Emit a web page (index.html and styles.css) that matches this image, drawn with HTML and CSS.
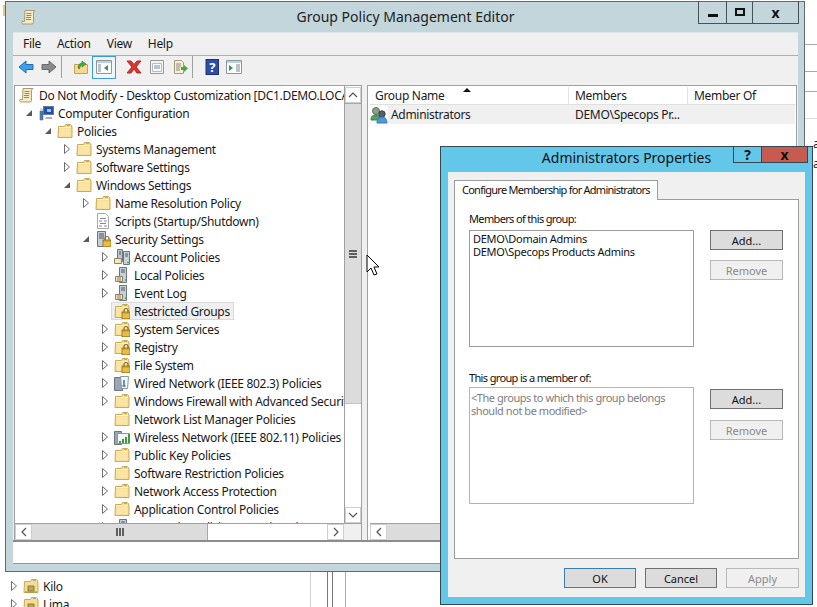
FILE: index.html
```html
<!DOCTYPE html>
<html lang="en">
<head>
    <meta charset="UTF-8">
    <title>Group Policy Management Editor</title>
    <link rel="stylesheet" href="styles.css">
</head>
<body>
    <svg class="defs" width="0" height="0">
        <symbol id="folder" viewBox="0 0 16 16">
            <path d="M1.500 3.500h6l1-2h5l1 1v1h.5v11h-14z" fill="#f7dd92" stroke="#c9a95f"/>
            <path d="M2 4.500h12" stroke="#fdf3cf"/>
            <path d="M10 2.500h3" stroke="#7db7e0"/>
            <path d="M2.500 5.500h11v8h-11z" fill="#fae5a6"/>
        </symbol>
        <symbol id="gpo-folder" viewBox="0 0 16 16">
            <path d="M1.500 3.500h6l1-2h5l1 1v1h.5v11h-14z" fill="#f7dd92" stroke="#c9a95f"/>
            <path d="M10 2.500h3" stroke="#7db7e0"/>
            <path d="M5 8h6v5H5z" fill="#b8a860" stroke="#8a7a38"/>
            <path d="M2 14h12" stroke="#a88c3c"/>
        </symbol>
        <symbol id="lock" viewBox="0 0 16 16">
            <path d="M10 9.500v-2a2 2 0 0 1 4 0v2" fill="none" stroke="#7d6a2a" stroke-width="1.200"/>
            <rect x="8" y="9" width="8" height="7" fill="#d9a72b" stroke="#8a6a14" stroke-width=".8"/>
            <path d="M8.500 12h7M8.500 14h7" stroke="#f2d36b"/>
        </symbol>
        <symbol id="scroll" viewBox="0 0 16 16">
            <path d="M4 1.500h10l-1.500 1.500v10.500a1.500 1.500 0 0 1-1.500 1.500H2a1.500 1.500 0 0 1-1-2.500h2.500z" fill="#f7ebc6" stroke="#a99b72"/>
            <path d="M5.500 4.500h5M5.500 6.500h5M5 8.500h5M5 10.500h5" stroke="#8f8a78"/>
        </symbol>
        <symbol id="computer" viewBox="0 0 16 16">
            <rect x="5.500" y="1.500" width="10" height="8" fill="#1f4fb5" stroke="#6f7a8a"/>
            <path d="M8 12h6v2H7z" fill="#aab3bd"/>
            <path d="M2 6h3v9H2z" fill="#3f7fb0" stroke="#5c6c7c" stroke-width=".6"/>
            <circle cx="3.500" cy="4.500" r="1.500" fill="#c9d3dd"/>
            <path d="M9 4h4v3H9z" fill="#9fc3ef"/>
        </symbol>
        <symbol id="script" viewBox="0 0 16 16">
            <path d="M2.500.5h8l3 3v12h-11z" fill="#fff" stroke="#a8a8a8"/>
            <path d="M5 5.500h6M4 8h3M9 8h3M5 10.500h6M4 13h3M9 13h3" stroke="#7c8c9c"/>
        </symbol>
        <symbol id="tower" viewBox="0 0 16 16">
            <path d="M2.500.5h8v15h-8z" fill="#c6ced6" stroke="#6b7680"/>
            <path d="M4 3h5M4 5h5M4 7h5" stroke="#4b5660"/>
        </symbol>
        <symbol id="server" viewBox="0 0 16 16">
            <path d="M5.500.5h7v15h-7z" fill="#c6ced6" stroke="#6b7680"/>
            <path d="M7 3h4M7 5h4" stroke="#4b5660"/>
            <path d="M1.500 9.500h7v5h-7z" fill="#f3e6bd" stroke="#8c8268"/>
            <path d="M3 11h4M3 13h4" stroke="#8c8268"/>
            <path d="M11 13h1.500" stroke="#35b04a" stroke-width="1.500"/>
        </symbol>
        <symbol id="servers" viewBox="0 0 16 16">
            <path d="M3.500.5h5v12h-5z" fill="#bcc6cf" stroke="#6b7680"/>
            <path d="M9.500 2.500h6v13h-6z" fill="#c9d3da" stroke="#6b7680"/>
            <path d="M11 5h3M11 7h3M5 3h2M5 5h2" stroke="#4b5660"/>
            <path d="M.5 9.500h7v5h-7z" fill="#f3e6bd" stroke="#8c8268"/>
            <path d="M13 13.500h2" stroke="#35b04a" stroke-width="1.500"/>
        </symbol>
        <symbol id="wired" viewBox="0 0 16 16">
            <path d="M.5 2.500h8v13h-8z" fill="#9aa6b2" stroke="#6b7680"/>
            <path d="M6.500 1.500h8l-1 12h-6z" fill="#f4f8fb" stroke="#8a97a3"/>
            <path d="M10 5v6M8.500 11h3" stroke="#3674ac" stroke-width="1.500"/>
        </symbol>
        <symbol id="wireless" viewBox="0 0 16 16">
            <path d="M.5 2.500h7v13h-7z" fill="#9aa6b2" stroke="#6b7680"/>
            <path d="M3.500 4.500h12v10h-12z" fill="#f4f8f4" stroke="#8a97a3"/>
            <path d="M6 14v-2M9 14v-4M12 14V8M15 14V5" stroke="#3d9a3d" stroke-width="2"/>
        </symbol>
        <symbol id="users" viewBox="0 0 18 18">
            <circle cx="6" cy="5" r="3.500" fill="#8aa08c" stroke="#5b6c5c"/>
            <path d="M1 14c0-4 2-5 5-5s4 1 4 5z" fill="#4fa35a" stroke="#3e7f48"/>
            <circle cx="12" cy="8" r="3.200" fill="#54606c" stroke="#39434e"/>
            <path d="M7 17c0-4 2-6 5-6s5 2 5 6z" fill="#4f9ad8" stroke="#3978ad"/>
        </symbol>
        <symbol id="tree-open" viewBox="0 0 8 8"><path d="M7 1v6H1z" fill="#5a5a5a"/></symbol>
        <symbol id="tree-closed" viewBox="0 0 8 12"><path d="M1.500 1.500 6.500 6l-5 4.500z" fill="#fff" stroke="#6e6e6e"/></symbol>
    </svg>

    <div class="backdrop">
        <div class="bg-sliver"></div>
        <div class="bg-rule bg-rule-a"></div>
        <div class="bg-rule bg-rule-b"></div>
        <div class="bg-rule bg-rule-c"></div>
        <div class="bg-rule bg-rule-d"></div>
        <div class="bg-col bg-col-a"></div>
        <div class="bg-col bg-col-b"></div>
        <div class="bg-col bg-col-c"></div>
        <div class="bg-col bg-col-d"></div>
        <div class="bg-letter bg-letter-a">a</div>
        <div class="bg-letter bg-letter-b">a</div>
        <div class="bg-rows">
            <div class="row"><svg class="exp-closed"><use href="#tree-closed"/></svg><svg class="ico"><use href="#gpo-folder"/></svg><span>Kilo</span></div>
            <div class="row"><svg class="exp-closed"><use href="#tree-closed"/></svg><svg class="ico"><use href="#gpo-folder"/></svg><span>Lima</span></div>
        </div>
    </div>

    <div class="window main-window">
        <div class="titlebar">
            <svg class="title-icon"><use href="#scroll"/></svg>
            <div class="title-text">Group Policy Management Editor</div>
            <div class="caption-btns">
                <div class="cap cap-min"><span class="glyph-min"></span></div>
                <div class="cap cap-max"><span class="glyph-max"></span></div>
                <div class="cap cap-close">x</div>
            </div>
        </div>
        <div class="client">
            <div class="menubar">
                <span>File</span><span>Action</span><span>View</span><span>Help</span>
            </div>
            <div class="toolbar">
                <svg class="tool" viewBox="0 0 16 16"><path d="M8 2 1 8l7 6v-3.500h7v-5H8z" fill="#3f9fe8" stroke="#1f6cb0"/></svg>
                <svg class="tool" viewBox="0 0 16 16"><path d="M8 2l7 6-7 6v-3.500H1v-5h7z" fill="#8a8a8a" stroke="#6a6a6a"/></svg>
                <span class="tool-sep"></span>
                <svg class="tool" viewBox="0 0 16 16"><path d="M1.500 5.500h13v9h-13z" fill="#f6d98e" stroke="#c3a35a"/><path d="M5 9c0-3 2-5 4-5V2l4 3-4 3V6c-1 0-2 1-2.500 4z" fill="#4aa83c" stroke="#2f7d28" stroke-width=".6"/></svg>
                <span class="tool-active"><svg class="tool" viewBox="0 0 16 16"><path d="M.5 1.500h15v13H.5z" fill="#fff" stroke="#8a98a4"/><path d="M1 2h14v2H1z" fill="#bcd0de"/><path d="M2 6h3M2 8h3M2 10h3M2 12h3" stroke="#7a8792"/><path d="M12 6v6L8 9z" fill="#2f9a4c"/></svg></span>
                <svg class="tool tool-del" viewBox="0 0 16 16"><path d="M1 2l5 6-5 6h4l3-4 3 4h4l-5-6 5-6h-4L8 5.500 5 2z" fill="#e0342c" stroke="#b02a24"/></svg>
                <svg class="tool" viewBox="0 0 16 16"><path d="M1.500 1.500h13v13h-13z" fill="#f3f3f3" stroke="#9a9a9a"/><path d="M3.500 4.500h9v8h-9z" fill="#fff" stroke="#bbb"/><path d="M5 7h6M5 9h6" stroke="#6c8aa3"/></svg>
                <svg class="tool" viewBox="0 0 16 16"><path d="M2.500 1.500h7l2 2v11h-9z" fill="#f8efd2" stroke="#a39a80"/><path d="M4 5h5M4 7h5M4 9h4M4 11h4" stroke="#8a8a8a"/><path d="M9 8h3V6l4 3.500-4 3.500v-2H9z" fill="#49a83f"/></svg>
                <span class="tool-sep"></span>
                <svg class="tool" viewBox="0 0 16 16"><rect x="2" y=".5" width="12.500" height="15" fill="#2c4ea8" stroke="#1c3278"/><text x="8.200" y="13" text-anchor="middle" class="help-mark">?</text></svg>
                <svg class="tool tool-pane" viewBox="0 0 16 16"><path d="M.5 1.500h15v13H.5z" fill="#fff" stroke="#8a98a4"/><path d="M1 2h14v2H1z" fill="#bcd0de"/><path d="M10 6h4M10 8h4M10 10h4M10 12h4" stroke="#7a8792"/><path d="M3 6v6l4-3z" fill="#2f9a4c"/></svg>
            </div>
            <div class="panes">
                <div class="pane tree-pane">
                    <div class="tree-main">
                        <div class="tree">
                            <div class="row lv0"><svg class="ico"><use href="#scroll"/></svg><span>Do Not Modify - Desktop Customization [DC1.DEMO.LOCAL] Policy</span></div>
                            <div class="row lv1"><svg class="exp-open"><use href="#tree-open"/></svg><svg class="ico"><use href="#computer"/></svg><span>Computer Configuration</span></div>
                            <div class="row lv2"><svg class="exp-open"><use href="#tree-open"/></svg><svg class="ico"><use href="#folder"/></svg><span>Policies</span></div>
                            <div class="row lv3"><svg class="exp-closed"><use href="#tree-closed"/></svg><svg class="ico"><use href="#folder"/></svg><span>Systems Management</span></div>
                            <div class="row lv3"><svg class="exp-closed"><use href="#tree-closed"/></svg><svg class="ico"><use href="#folder"/></svg><span>Software Settings</span></div>
                            <div class="row lv3"><svg class="exp-open"><use href="#tree-open"/></svg><svg class="ico"><use href="#folder"/></svg><span>Windows Settings</span></div>
                            <div class="row lv4"><svg class="exp-closed"><use href="#tree-closed"/></svg><svg class="ico"><use href="#folder"/></svg><span>Name Resolution Policy</span></div>
                            <div class="row lv4"><span class="exp-none"></span><svg class="ico"><use href="#script"/></svg><span>Scripts (Startup/Shutdown)</span></div>
                            <div class="row lv4"><svg class="exp-open"><use href="#tree-open"/></svg><svg class="ico"><use href="#tower"/><use href="#lock"/></svg><span>Security Settings</span></div>
                            <div class="row lv5"><svg class="exp-closed"><use href="#tree-closed"/></svg><svg class="ico"><use href="#servers"/></svg><span>Account Policies</span></div>
                            <div class="row lv5"><svg class="exp-closed"><use href="#tree-closed"/></svg><svg class="ico"><use href="#server"/></svg><span>Local Policies</span></div>
                            <div class="row lv5"><svg class="exp-closed"><use href="#tree-closed"/></svg><svg class="ico"><use href="#server"/></svg><span>Event Log</span></div>
                            <div class="row lv5"><span class="exp-none"></span><div class="sel-box"><svg class="ico"><use href="#folder"/><use href="#lock"/></svg><span>Restricted Groups</span></div></div>
                            <div class="row lv5"><svg class="exp-closed"><use href="#tree-closed"/></svg><svg class="ico"><use href="#folder"/><use href="#lock"/></svg><span>System Services</span></div>
                            <div class="row lv5"><svg class="exp-closed"><use href="#tree-closed"/></svg><svg class="ico"><use href="#folder"/><use href="#lock"/></svg><span>Registry</span></div>
                            <div class="row lv5"><svg class="exp-closed"><use href="#tree-closed"/></svg><svg class="ico"><use href="#folder"/><use href="#lock"/></svg><span>File System</span></div>
                            <div class="row lv5"><svg class="exp-closed"><use href="#tree-closed"/></svg><svg class="ico"><use href="#wired"/></svg><span>Wired Network (IEEE 802.3) Policies</span></div>
                            <div class="row lv5"><svg class="exp-closed"><use href="#tree-closed"/></svg><svg class="ico"><use href="#folder"/></svg><span>Windows Firewall with Advanced Security</span></div>
                            <div class="row lv5"><span class="exp-none"></span><svg class="ico"><use href="#folder"/></svg><span>Network List Manager Policies</span></div>
                            <div class="row lv5"><svg class="exp-closed"><use href="#tree-closed"/></svg><svg class="ico"><use href="#wireless"/></svg><span>Wireless Network (IEEE 802.11) Policies</span></div>
                            <div class="row lv5"><svg class="exp-closed"><use href="#tree-closed"/></svg><svg class="ico"><use href="#folder"/></svg><span>Public Key Policies</span></div>
                            <div class="row lv5"><svg class="exp-closed"><use href="#tree-closed"/></svg><svg class="ico"><use href="#folder"/></svg><span>Software Restriction Policies</span></div>
                            <div class="row lv5"><svg class="exp-closed"><use href="#tree-closed"/></svg><svg class="ico"><use href="#folder"/></svg><span>Network Access Protection</span></div>
                            <div class="row lv5"><svg class="exp-closed"><use href="#tree-closed"/></svg><svg class="ico"><use href="#folder"/></svg><span>Application Control Policies</span></div>
                            <div class="row lv5"><svg class="exp-closed"><use href="#tree-closed"/></svg><svg class="ico"><use href="#server"/></svg><span>IP Security Policies on Active Directory</span></div>
                        </div>
                        <div class="vscroll">
                            <div class="sb-btn"><svg viewBox="0 0 10 6" class="sb-arrow"><path d="M1 5l4-4 4 4" /></svg></div>
                            <div class="vthumb"><span class="grip-h"></span></div>
                            <div class="sb-track"></div>
                            <div class="sb-btn"><svg viewBox="0 0 10 6" class="sb-arrow"><path d="M1 1l4 4 4-4" /></svg></div>
                        </div>
                    </div>
                    <div class="hscroll">
                        <div class="sb-btn-h"><svg viewBox="0 0 6 10" class="sb-arrow-h"><path d="M5 1 1 5l4 4" /></svg></div>
                        <div class="hthumb hthumb-tree"><span class="grip-v"></span></div>
                        <div class="sb-track"></div>
                        <div class="sb-btn-h"><svg viewBox="0 0 6 10" class="sb-arrow-h"><path d="M1 1l4 4-4 4" /></svg></div>
                        <div class="sb-corner"></div>
                    </div>
                </div>
                <div class="pane list-pane">
                    <div class="list-head">
                        <div class="col col-name">Group Name<i class="sort-mark"></i></div>
                        <div class="col col-members">Members</div>
                        <div class="col col-of">Member Of</div>
                    </div>
                    <div class="list-row">
                        <svg class="ico-users"><use href="#users"/></svg>
                        <div class="cell-name">Administrators</div>
                        <div class="cell-members">DEMO\Specops Pr...</div>
                    </div>
                    <div class="list-fill"></div>
                    <div class="hscroll">
                        <div class="sb-btn-h"><svg viewBox="0 0 6 10" class="sb-arrow-h"><path d="M5 1 1 5l4 4" /></svg></div>
                        <div class="hthumb hthumb-wide"></div>
                    </div>
                </div>
            </div>
            <div class="statusbar"></div>
        </div>
    </div>

    <div class="window dialog">
        <div class="dlg-titlebar">
            <div class="dlg-title">Administrators Properties</div>
            <div class="dlg-help">?</div>
            <div class="dlg-close">x</div>
        </div>
        <div class="dlg-client">
            <div class="tab">Configure Membership for Administrators</div>
            <div class="tab-pane">
                <div class="group">
                    <div class="group-label">Members of this group:</div>
                    <div class="group-body">
                        <div class="listbox">DEMO\Domain Admins<br>DEMO\Specops Products Admins</div>
                        <div class="side-btns">
                            <div class="btn">Add...</div>
                            <div class="btn btn-off">Remove</div>
                        </div>
                    </div>
                </div>
                <div class="group group-second">
                    <div class="group-label">This group is a member of:</div>
                    <div class="group-body">
                        <div class="listbox listbox-off">&lt;The groups to which this group belongs<br>should not be modified&gt;</div>
                        <div class="side-btns side-btns-low">
                            <div class="btn">Add...</div>
                            <div class="btn btn-off">Remove</div>
                        </div>
                    </div>
                </div>
            </div>
            <div class="dlg-footer">
                <div class="btn btn-foot btn-default">OK</div>
                <div class="btn btn-foot">Cancel</div>
                <div class="btn btn-off">Apply</div>
            </div>
        </div>
    </div>

    <svg class="cursor" viewBox="0 0 13 22"><path d="M1 1v17l4-4 3 7 3-1-3-7h5z" fill="#fff" stroke="#000"/></svg>
</body>
</html>
```

FILE: styles.css
```css
* {
    box-sizing: border-box;
}

body {
    margin: 0;
    width: 817px;
    height: 607px;
    position: relative;
    overflow: hidden;
    background: #fff;
    font-family: "Noto Sans", "Open Sans", sans-serif;
    font-size: 12px;
    letter-spacing: -0.3px;
    color: #1a1a1a;
}

.defs {
    position: absolute;
}

svg {
    display: block;
    flex: none;
}

/* stuff behind the windows */
.backdrop {
    position: absolute;
    inset: 0;
}

.bg-sliver {
    position: absolute;
    left: 3px;
    top: 5px;
    width: 2px;
    height: 11px;
    background: #e6c982;
}

.bg-rule {
    position: absolute;
    left: 805px;
    right: 0;
    height: 1px;
    background: #a8a8a8;
}

.bg-rule-a { top: 44px; }
.bg-rule-b { top: 71px; }
.bg-rule-c { top: 91px; }
.bg-rule-d { top: 118px; background: #ddd; }

.bg-col {
    position: absolute;
    top: 572px;
    bottom: 0;
    width: 1px;
    background: #a9a9a9;
}

.bg-col-a { left: 310px; background: #d0d0d0; }
.bg-col-b { left: 327px; background: #777; }
.bg-col-c { left: 332px; background: #777; }
.bg-col-d { left: 345px; }

.bg-letter {
    position: absolute;
    left: 813px;
    line-height: 14px;
}

.bg-letter-a { top: 137px; }
.bg-letter-b { top: 157px; }

.bg-rows {
    position: absolute;
    top: 577px;
    left: 10px;
}

/* main window */
.window {
    position: absolute;
    display: flex;
    flex-direction: column;
}

.main-window {
    left: 5px;
    top: 1px;
    width: 800px;
    height: 571px;
    background: #c3d6dc;
    border: 1px solid #5d6a72;
    padding: 0 6px 7px 7px;
}

.titlebar {
    height: 30px;
    flex: none;
    display: flex;
    justify-content: center;
    position: relative;
}

.title-icon {
    position: absolute;
    left: 8px;
    top: 7px;
    width: 16px;
    height: 16px;
}

.title-text {
    font-size: 14px;
    line-height: 30px;
    letter-spacing: 0;
    color: #222;
}

.caption-btns {
    position: absolute;
    right: -1px;
    top: -1px;
    display: flex;
    height: 23px;
    border: 1px solid #46525a;
    border-top: none;
}

.cap {
    display: flex;
    align-items: center;
    justify-content: center;
    border-left: 1px solid #46525a;
    font-weight: bold;
    font-size: 14px;
    color: #111;
}

.cap:first-child {
    border-left: none;
}

.cap-min { width: 27px; }
.cap-max { width: 26px; }
.cap-close { width: 46px; }

.glyph-min {
    width: 10px;
    height: 3px;
    margin-top: 6px;
    background: #111;
}

.glyph-max {
    width: 10px;
    height: 8px;
    border: 2px solid #111;
}

.client {
    flex: 1;
    min-height: 0;
    display: flex;
    flex-direction: column;
    background: #f0f0f0;
    border-top: 1px solid #dfe8eb;
}

.menubar {
    height: 23px;
    flex: none;
    display: flex;
    align-items: center;
    gap: 16px;
    padding: 0 0 1px 10px;
    border-bottom: 1px solid #a9b0b6;
}

.toolbar {
    height: 29px;
    flex: none;
    display: flex;
    align-items: center;
    padding: 0 0 7px 5px;
    gap: 7px;
}

.tool {
    width: 16px;
    height: 16px;
}

.tool-sep {
    width: 1px;
    height: 22px;
    background: #a0a0a0;
    margin: 0 4px 0 -3px;
}

.tool-active {
    width: 24px;
    height: 23px;
    margin-left: -4px;
    display: flex;
    align-items: center;
    justify-content: center;
    background: #eef6fc;
    border: 1px solid #3c9ad6;
}

.tool-del {
    margin-left: 3px;
}

.tool-pane {
    margin-left: -1px;
}

.help-mark {
    font-size: 13px;
    font-weight: bold;
    fill: #fff;
}

.panes {
    flex: 1;
    min-height: 0;
    display: flex;
    gap: 5px;
    padding-left: 1px;
    padding-right: 1px;
    background: #f0f0f0;
    border-bottom: 2px solid #8d8d8d;
}

.pane {
    display: flex;
    flex-direction: column;
    background: #fff;
    border: 1px solid #a0a0a0;
    border-bottom: none;
    min-width: 0;
}

.tree-pane {
    width: 348px;
    flex: none;
}

.list-pane {
    flex: 1;
    padding: 1px 1px 0 2px;
}

.tree-main {
    flex: 1;
    min-height: 0;
    display: flex;
}

.tree {
    flex: 1;
    min-width: 0;
    overflow: hidden;
    white-space: nowrap;
}

.row {
    height: 18px;
    display: flex;
    align-items: center;
    white-space: nowrap;
}

.lv0 { padding-left: 4px; }
.lv1 { padding-left: 10px; }
.lv2 { padding-left: 29px; }
.lv3 { padding-left: 48px; }
.lv4 { padding-left: 67px; }
.lv5 { padding-left: 86px; }

.exp-open,
.exp-closed,
.exp-none {
    width: 8px;
    margin-right: 5px;
    flex: none;
}

.exp-open { height: 8px; }
.exp-closed { height: 12px; }

.ico {
    width: 16px;
    height: 16px;
    margin-right: 4px;
}

.sel-box {
    display: flex;
    align-items: center;
    height: 18px;
    margin-left: -3px;
    padding: 0 3px 0 2px;
    background: #f0f0f0;
    border: 1px solid #dadada;
}

.vscroll {
    width: 17px;
    flex: none;
    display: flex;
    flex-direction: column;
    padding-top: 1px;
    border-left: 1px solid #a0a0a0;
    background: #fff;
}

.sb-btn {
    height: 16px;
    flex: none;
    display: flex;
    align-items: center;
    justify-content: center;
    background: #fff;
    border: 1px solid #cfcfcf;
}

.sb-arrow {
    width: 10px;
    height: 6px;
}

.sb-arrow path,
.sb-arrow-h path {
    fill: none;
    stroke: #555;
    stroke-width: 1.2;
}

.vthumb {
    height: 301px;
    flex: none;
    display: flex;
    align-items: center;
    justify-content: center;
    background: #dcdcdc;
    border-top: 1px solid #a8a8a8;
    border-bottom: 1px solid #c4c4c4;
}

.grip-h {
    width: 8px;
    height: 8px;
    background: repeating-linear-gradient(#606060 0 2px, transparent 2px 3px);
}

.sb-track {
    flex: 1;
    background: #fff;
}

.hscroll {
    height: 17px;
    flex: none;
    display: flex;
    border-top: 1px solid #a0a0a0;
    background: #fff;
}

.sb-btn-h {
    width: 17px;
    flex: none;
    display: flex;
    align-items: center;
    justify-content: center;
    background: #fff;
    border: 1px solid #cfcfcf;
}

.sb-arrow-h {
    width: 6px;
    height: 10px;
}

.hthumb {
    flex: none;
    display: flex;
    align-items: center;
    justify-content: center;
    background: #dcdcdc;
    border-right: 1px solid #a8a8a8;
}

.hthumb-tree {
    width: 176px;
}

.hthumb-wide {
    flex: 1;
    border-right: none;
}

.grip-v {
    width: 8px;
    height: 8px;
    background: repeating-linear-gradient(90deg, #606060 0 2px, transparent 2px 3px);
}

.sb-corner {
    width: 17px;
    flex: none;
    background: #f0f0f0;
}

/* result list */
.list-head {
    height: 18px;
    flex: none;
    display: flex;
    border-bottom: 1px solid #e0e0e0;
}

.col {
    line-height: 17px;
    border-right: 1px solid #e3e3e3;
    position: relative;
}

.col-name { width: 199px; padding-left: 5px; }
.col-members { width: 119px; padding-left: 6px; }
.col-of { flex: 1; border-right: none; padding-left: 6px; }

.sort-mark {
    position: absolute;
    left: 93px;
    top: 1px;
    width: 0;
    height: 0;
    border-left: 4px solid transparent;
    border-right: 4px solid transparent;
    border-bottom: 4px solid #111;
}

.list-row {
    height: 19px;
    flex: none;
    display: flex;
    align-items: center;
}

.ico-users {
    width: 18px;
    height: 18px;
    flex: none;
}

.cell-name {
    width: 181px;
    height: 100%;
    line-height: 19px;
    padding-left: 3px;
    flex: none;
    background: #f0f0f0;
}

.cell-members {
    flex: 1;
    height: 100%;
    line-height: 19px;
    padding-left: 6px;
    background: #f0f0f0;
}

.list-fill {
    flex: 1;
}

.statusbar {
    height: 22px;
    flex: none;
    background: #fff;
    border-bottom: 1px solid #8d9aa0;
}

/* properties dialog */
.dialog {
    left: 440px;
    top: 146px;
    width: 373px;
    height: 459px;
    background: #63c7ea;
    border: 1px solid #38464f;
    padding: 0 7px 7px 7px;
    font-size: 11px;
    letter-spacing: 0;
}

.dlg-titlebar {
    height: 25px;
    flex: none;
    position: relative;
    display: flex;
    justify-content: center;
}

.dlg-title {
    font-size: 14px;
    line-height: 21px;
    color: #111;
}

.dlg-help,
.dlg-close {
    position: absolute;
    top: -1px;
    height: 17px;
    display: flex;
    align-items: center;
    justify-content: center;
    font-size: 14px;
    font-weight: bold;
    color: #111;
    border: 1px solid #38464f;
}

.dlg-help {
    right: 43px;
    width: 29px;
}

.dlg-close {
    right: -3px;
    width: 47px;
    background: #c75b50;
}

.dlg-client {
    flex: 1;
    min-height: 0;
    display: flex;
    flex-direction: column;
    background: #f0f0f0;
    padding: 8px 6px 0 6px;
}

.tab {
    align-self: flex-start;
    height: 20px;
    line-height: 17px;
    padding: 0 7px;
    letter-spacing: -0.75px;
    background: #fff;
    border: 1px solid #9c9c9c;
    border-bottom: none;
    position: relative;
    z-index: 1;
    margin-bottom: -1px;
    color: #111;
}

.tab-pane {
    flex: 1;
    min-height: 0;
    background: #fff;
    border: 1px solid #9c9c9c;
    padding: 12px 15px 0 14px;
}

.group-label {
    line-height: 14px;
    height: 18px;
    letter-spacing: -0.65px;
    color: #111;
}

.group-second {
    margin-top: 24px;
}

.group-second .group-label {
    height: 16px;
}

.group-body {
    display: flex;
    gap: 15px;
}

.listbox {
    width: 227px;
    height: 117px;
    border: 1px solid #9c9c9c;
    padding: 1px 3px;
    line-height: 13px;
    letter-spacing: -0.3px;
    color: #111;
    background: #fff;
}

.listbox-off {
    padding: 3px 1px;
    letter-spacing: -0.45px;
    color: #7e7e7e;
    border-color: #b4b4b4;
}

.side-btns {
    display: flex;
    flex-direction: column;
    gap: 10px;
    margin-left: 1px;
}

.side-btns-low {
    margin-top: 2px;
    gap: 11px;
}

.btn {
    width: 73px;
    height: 20px;
    display: flex;
    align-items: center;
    justify-content: center;
    background: #dcdcdc;
    border: 1px solid #707070;
    color: #111;
}

.btn-foot {
    width: 72px;
}

.btn-off {
    background: #f0f0f0;
    border-color: #b8b8b8;
    color: #8a8a8a;
}

.btn-default {
    border-color: #3a7fb2;
}

.dlg-footer {
    height: 38px;
    flex: none;
    display: flex;
    justify-content: flex-end;
    align-items: center;
    gap: 9px;
}

.cursor {
    position: absolute;
    left: 366px;
    top: 254px;
    width: 13px;
    height: 22px;
}
```
